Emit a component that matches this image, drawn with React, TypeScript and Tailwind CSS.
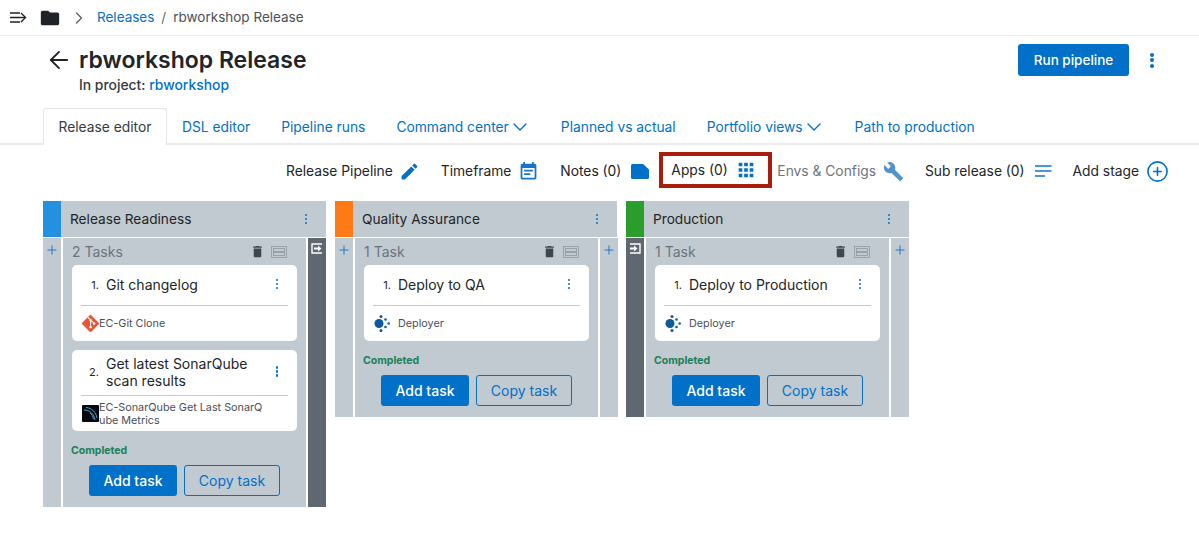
import { ArrowLeft, ChevronDown, ChevronRight, CirclePlus, Plus } from "lucide-react";
import { MdApps, MdBuild, MdDelete, MdEdit, MdEventNote, MdFolder } from "react-icons/md";
import { SiGit } from "react-icons/si";

type Task = { title: string[]; plugin: string[]; icon: "git" | "sonar" | "deployer" };

type Stage = {
  name: string;
  color: string;
  width: string;
  count: string;
  tasks: Task[];
  left: "plus" | "in";
  right: "plus" | "out";
};

const stages: Stage[] = [
  {
    name: "Release Readiness",
    color: "bg-[#2490e0]",
    width: "w-[283px]",
    count: "2 Tasks",
    left: "plus",
    right: "out",
    tasks: [
      { title: ["Git changelog"], plugin: ["EC-Git Clone"], icon: "git" },
      {
        title: ["Get latest SonarQube", "scan results"],
        plugin: ["EC-SonarQube Get Last SonarQ", "ube Metrics"],
        icon: "sonar",
      },
    ],
  },
  {
    name: "Quality Assurance",
    color: "bg-[#fd7a14]",
    width: "w-[282px]",
    count: "1 Task",
    left: "plus",
    right: "plus",
    tasks: [{ title: ["Deploy to QA"], plugin: ["Deployer"], icon: "deployer" }],
  },
  {
    name: "Production",
    color: "bg-[#2a9d2a]",
    width: "w-[283px]",
    count: "1 Task",
    left: "in",
    right: "plus",
    tasks: [{ title: ["Deploy to Production"], plugin: ["Deployer"], icon: "deployer" }],
  },
];

function Dots({ big }: { big?: boolean }) {
  const size = big ? "size-[4px]" : "size-[2.5px]";
  return (
    <span className="flex flex-col gap-[1.5px]">
      <span className={`${size} rounded-full bg-[#0070c9]`} />
      <span className={`${size} rounded-full bg-[#0070c9]`} />
      <span className={`${size} rounded-full bg-[#0070c9]`} />
    </span>
  );
}

function SidebarIcon() {
  return (
    <svg width="17" height="11" viewBox="0 0 17 11" fill="none" stroke="#1f2328" strokeWidth="1.4">
      <path d="M0 1h10M0 5.500h10M0 10h10" />
      <path d="M11 1l4.500 4.500L11 10" />
      <path d="M10 5.500h5" />
    </svg>
  );
}

function BoxOut() {
  return (
    <svg width="12" height="11" viewBox="0 0 12 11" fill="none">
      <path d="M11 1H1v9h10" stroke="#fff" strokeWidth="1.4" />
      <path d="M3 4.500h4V2.500L10.500 5.500 7 8.500V6.500H3z" fill="#fff" />
    </svg>
  );
}

function BoxIn() {
  return (
    <svg width="12" height="11" viewBox="0 0 12 11" fill="none">
      <path d="M1 1h10v9H1" stroke="#fff" strokeWidth="1.4" />
      <path d="M1 4.500h4V2.500L8.500 5.500 5 8.500V6.500H1z" fill="#fff" />
    </svg>
  );
}

function NoteIcon() {
  return (
    <svg width="18" height="15" viewBox="0 0 18 15" fill="#0070c9">
      <path d="M1.500 0H12l6 5.500V13.500a1.500 1.500 0 0 1-1.500 1.500h-15A1.500 1.500 0 0 1 0 13.500v-12A1.500 1.500 0 0 1 1.500 0z" />
    </svg>
  );
}

function ListIcon() {
  return (
    <svg width="17" height="12" viewBox="0 0 17 12" stroke="#1573c9" strokeWidth="1.6">
      <path d="M0 1h16.500M0 6h16.500M0 11h10" />
    </svg>
  );
}

function ViewIcon() {
  return (
    <svg width="16" height="12" viewBox="0 0 16 12" fill="none" stroke="#8f989f" strokeWidth="0.8">
      <rect x="0.500" y="0.500" width="15" height="11" />
      <rect x="2.500" y="2.500" width="11" height="3" />
      <rect x="2.500" y="6.500" width="11" height="3" />
    </svg>
  );
}

function SonarIcon() {
  return (
    <svg width="17" height="17" viewBox="0 0 17 17" fill="none">
      <rect width="17" height="17" rx="1" fill="#05090f" />
      <path d="M2 5c6 0 10 4 11 10M4 2.500c6 .5 10 5 11 10.500M8 8c2 1.500 3 3.500 3.500 6" stroke="#4f9fc9" strokeWidth="1" />
    </svg>
  );
}

function DeployerIcon() {
  return (
    <svg width="17" height="17" viewBox="0 0 17 17" fill="#0b5a9e">
      <circle cx="5" cy="8.500" r="4.500" />
      <circle cx="7" cy="1.500" r="1.500" />
      <circle cx="11.500" cy="4.500" r="1.300" />
      <circle cx="14.700" cy="8.500" r="1.300" />
      <circle cx="11.500" cy="12" r="1.300" />
      <circle cx="7" cy="15.500" r="1.500" />
    </svg>
  );
}

function TaskCard({ task, index }: { task: Task; index: number }) {
  const twoLines = task.title.length > 1;
  return (
    <div className="w-[225px] rounded-[5px] bg-white px-[9px]">
      <div className={`flex items-center border-b border-[#c1cad0] pb-[2px] ${twoLines ? "h-[46px]" : "h-[41px]"}`}>
        <span className="w-[25px] pr-[7px] pt-[2px] text-right text-[11px] text-[#212529]">{index + 1}.</span>
        <div className="flex-1 text-[14px] leading-[17px] text-[#212529]">
          {task.title.map((t) => (
            <div key={t}>{t}</div>
          ))}
        </div>
        <span className="mr-[10px]">
          <Dots />
        </span>
      </div>
      <div className="flex h-[35px] items-center pl-px">
        <span className="flex w-[17px] shrink-0 justify-center">
          {task.icon === "git" && <SiGit className="size-[17px] text-[#f05133]" />}
          {task.icon === "sonar" && <SonarIcon />}
          {task.icon === "deployer" && <DeployerIcon />}
        </span>
        <div className={`text-[10.800px] leading-[13px] text-[#495057] ${task.icon === "deployer" ? "ml-[7px]" : ""}`}>
          {task.plugin.map((p) => (
            <div key={p}>{p}</div>
          ))}
        </div>
      </div>
    </div>
  );
}

function SideColumn({ kind, edge }: { kind: "plus" | "in" | "out"; edge: "left" | "right" }) {
  const dark = kind !== "plus";
  return (
    <div className={`flex w-[18px] shrink-0 justify-center pt-[5px] ${dark ? "bg-[#5f6871]" : "bg-[#c1cad0]"} ${edge === "left" ? "mr-[2px]" : "ml-[2px]"}`}>
      {kind === "plus" && <Plus size={14} strokeWidth={1.6} className="text-[#1573c9]" />}
      {kind === "in" && <BoxIn />}
      {kind === "out" && <BoxOut />}
    </div>
  );
}

function StageColumn({ stage }: { stage: Stage }) {
  return (
    <div className={`${stage.width} shrink-0`}>
      <div className="flex h-[36px] bg-[#c1cad0]">
        <div className={`w-[18px] ${stage.color}`} />
        <div className="flex flex-1 items-center justify-between pl-[9px] pr-[19px] text-[13.700px] text-[#212529]">
          <span>{stage.name}</span>
          <Dots />
        </div>
      </div>
      <div className="mt-px flex">
        <SideColumn kind={stage.left} edge="left" />
        <div className="flex-1 bg-[#c1cad0] pb-[11px]">
          <div className="flex h-[27px] items-center justify-between pl-[9px] pr-[19px]">
            <span className="text-[14px] text-[#6b747c]">{stage.count}</span>
            <span className="flex items-center gap-[6px]">
              <MdDelete className="size-[15px] text-[#3f464d]" />
              <ViewIcon />
            </span>
          </div>
          <div className="flex flex-col gap-[9px] px-[9px]">
            {stage.tasks.map((t, i) => (
              <TaskCard key={t.title[0]} task={t} index={i} />
            ))}
          </div>
          <div className="mt-[13px] pl-[8px] text-[10.500px] font-bold leading-[14px] text-[#1a7f5a]">Completed</div>
          <div className="mt-[7px] flex justify-center gap-[7px]">
            <button className="h-[31px] w-[88px] rounded-[3px] bg-[#0070c9] text-[14px] font-medium text-white">Add task</button>
            <button className="h-[31px] w-[96px] rounded-[3px] border border-[#0070c9] text-[14px] text-[#0070c9]">Copy task</button>
          </div>
        </div>
        <SideColumn kind={stage.right} edge="right" />
      </div>
    </div>
  );
}

function Tool({ label, children, muted, gap }: { label: string; children: React.ReactNode; muted?: boolean; gap: string }) {
  return (
    <div className={`flex items-center ${gap} text-[13.800px] ${muted ? "text-[#6c757d]" : "text-[#212529]"}`}>
      <span>{label}</span>
      {children}
    </div>
  );
}

const tabs = ["DSL editor", "Pipeline runs", "Command center", "Planned vs actual", "Portfolio views", "Path to production"];
const dropdownTabs = ["Command center", "Portfolio views"];

export default function App() {
  return (
    <div className="h-[550px] w-[1199px] overflow-hidden bg-white font-['Inter',sans-serif] text-[#212529]">
      {/* Breadcrumb */}
      <div className="flex h-[36px] items-center border-b border-[#eeeeee] pl-[10px] text-[13.500px]">
        <SidebarIcon />
        <MdFolder className="ml-[12px] size-[22px] text-[#1f2328]" />
        <ChevronRight size={20} strokeWidth={1.8} className="ml-[8px] text-[#5f6871]" />
        <span className="ml-[8px] text-[#0070c9]">Releases</span>
        <span className="ml-[7px] text-[#5f6871]">/</span>
        <span className="ml-[7px] text-[#495057]">rbworkshop Release</span>
      </div>

      {/* Title */}
      <div className="flex h-[72px] items-start justify-between pl-[45px] pr-[45px]">
        <div className="flex pt-[8px]">
          <ArrowLeft size={28} strokeWidth={1.6} className="mt-[2px] text-[#212529]" />
          <div className="ml-[6px]">
            <h1 className="text-[23px] font-semibold leading-[33px]">rbworkshop Release</h1>
            <div className="text-[13.900px] font-medium leading-[16px] text-[#343a40]">
              In project: <span className="text-[#0070c9]">rbworkshop</span>
            </div>
          </div>
        </div>
        <div className="flex items-center gap-[21px] pt-[8px]">
          <button className="h-[32px] w-[111px] rounded-[3px] bg-[#0070c9] text-[13.500px] font-medium text-white">Run pipeline</button>
          <Dots big />
        </div>
      </div>

      {/* Tabs */}
      <div className="flex h-[37px] items-end border-b-2 border-[#e9ecef] pl-[43px] text-[13.800px]">
        <div className="-mb-[2px] flex h-[37px] w-[124px] items-center justify-center rounded-t-[3px] border border-b-0 border-[#e3e6e9] bg-white text-[#343a40]">Release editor</div>
        <div className="flex h-[36px] items-center gap-[31px] pl-[15px] pt-[4px] text-[#0070c9]">
          {tabs.map((t) => (
            <span key={t} className="flex items-center">
              {t}
              {dropdownTabs.includes(t) && <ChevronDown size={24} strokeWidth={1.4} className="-ml-px -mr-[2px]" />}
            </span>
          ))}
        </div>
      </div>

      {/* Toolbar */}
      <div className="flex h-[56px] items-center justify-end gap-[21px] pb-[4px] pr-[30px]">
        <Tool label="Release Pipeline" gap="gap-[6px]">
          <MdEdit className="size-[21px] text-[#0070c9]" />
        </Tool>
        <Tool label="Timeframe" gap="gap-[7px]">
          <MdEventNote className="size-[21px] text-[#1573c9]" />
        </Tool>
        <Tool label="Notes (0)" gap="gap-[10px]">
          <NoteIcon />
        </Tool>
        <div className="-ml-[11px] -mr-[16px] mb-[2px] box-border flex h-[36px] w-[113px] items-center border-[4px] border-[#a81d0d] pl-[8px]">
          <Tool label="Apps (0)" gap="gap-[7px]">
            <MdApps className="size-[22px] text-[#0070c9]" />
          </Tool>
        </div>
        <Tool label="Envs & Configs" muted gap="gap-[7px]">
          <MdBuild className="size-[21px] text-[#4f93d1]" />
        </Tool>
        <Tool label="Sub release (0)" gap="gap-[10px]">
          <ListIcon />
        </Tool>
        <Tool label="Add stage" gap="gap-[7px]">
          <CirclePlus size={23} strokeWidth={1.7} className="text-[#0070c9]" />
        </Tool>
      </div>

      {/* Stages */}
      <div className="flex items-start gap-[9px] pl-[43px]">
        {stages.map((s) => (
          <StageColumn key={s.name} stage={s} />
        ))}
      </div>
    </div>
  );
}
